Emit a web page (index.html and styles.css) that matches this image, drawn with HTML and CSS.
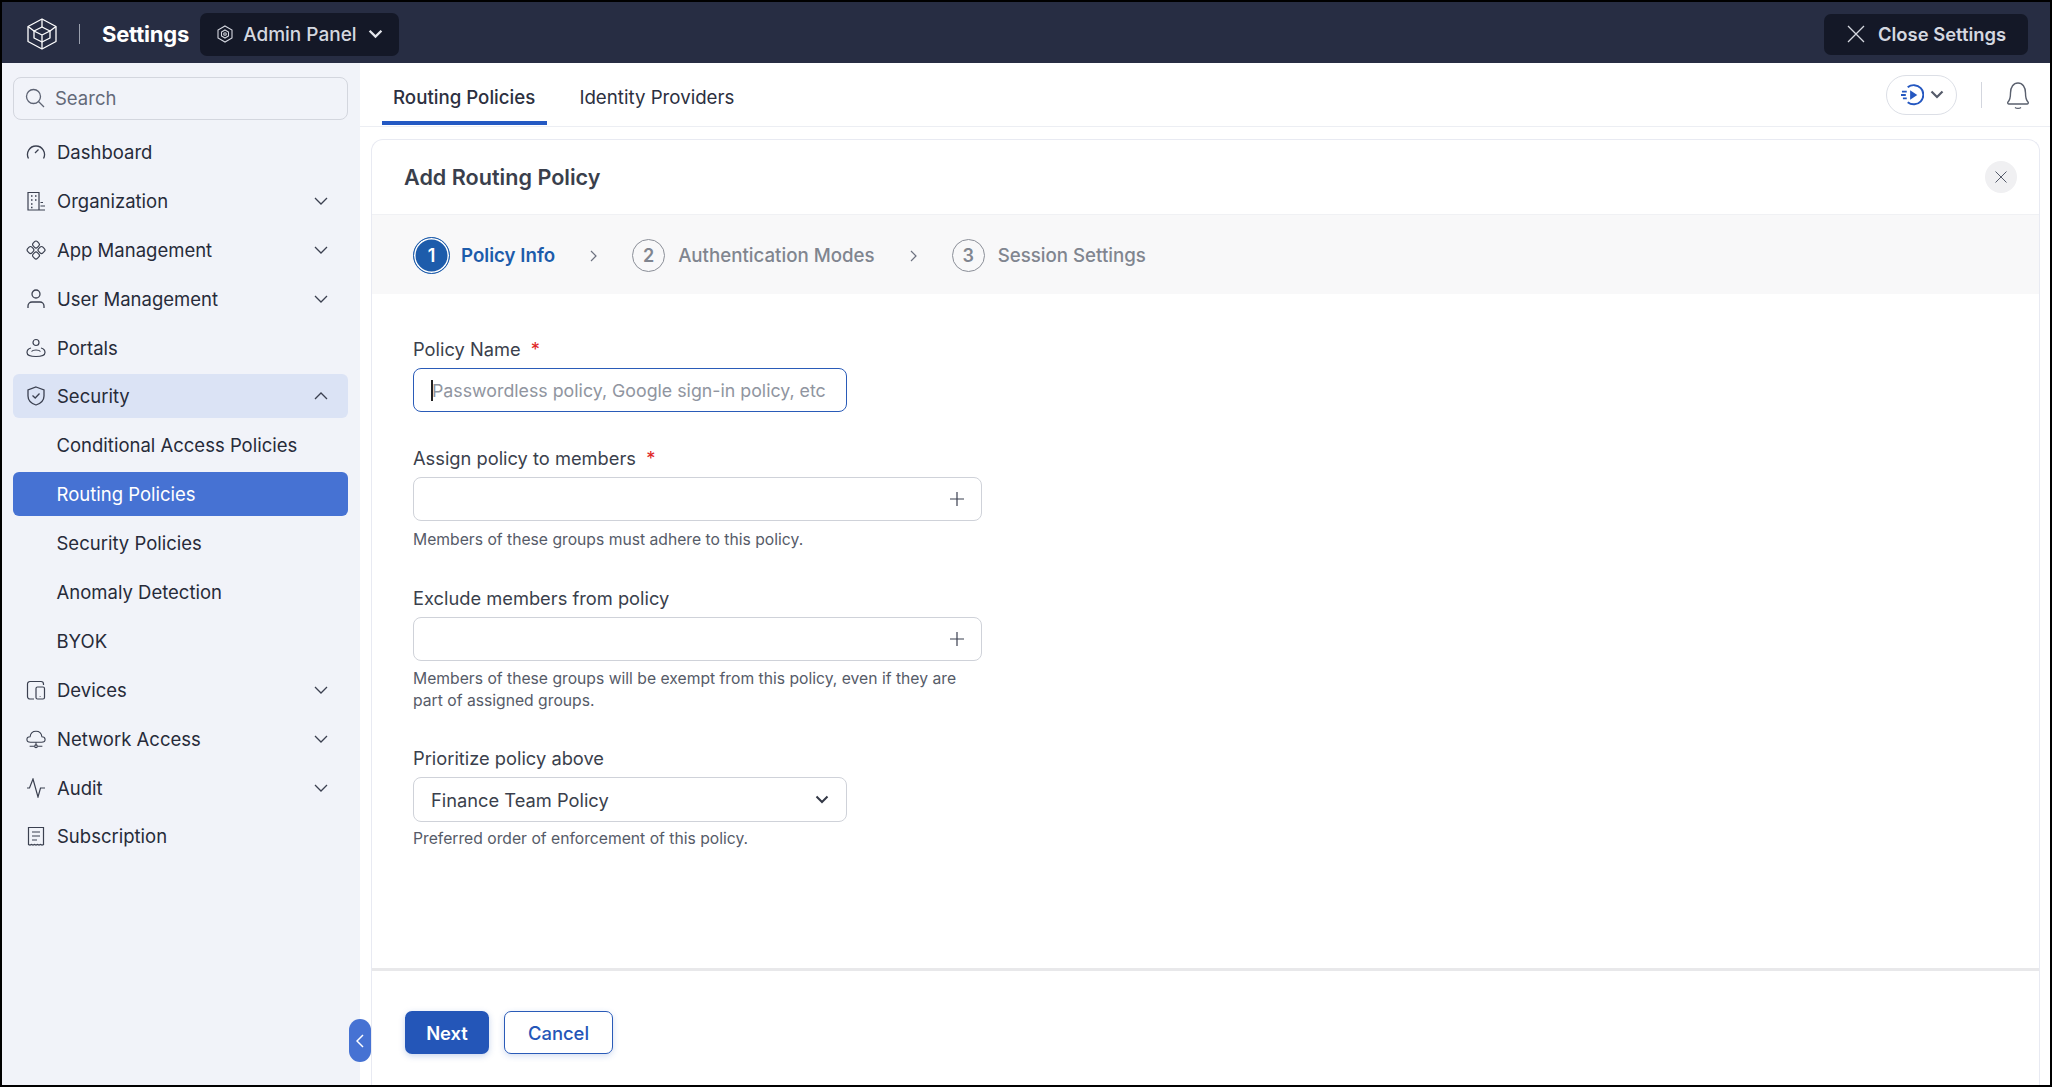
FILE: index.html
```html
<!DOCTYPE html>
<html lang="en">
<head>
    <meta charset="UTF-8">
    <title>Add Routing Policy</title>
    <link rel="stylesheet" href="styles.css">
</head>
<body>
    <header class="topbar">
        <svg class="logo" viewBox="0 0 32 34" fill="none" stroke="#fff" stroke-width="1.3" stroke-linejoin="round"><path d="M16 2 30 9.5V24.5L16 32 2 24.5V9.5Z"/><path d="M16 10 24 14V21L16 25 8 21V14Z"/><path d="M8 14 16 18 24 14M16 18V32M16 2V10M2 9.5 8 14M30 9.5 24 14"/></svg>
        <span class="topbar-sep"></span>
        <span class="topbar-title">Settings</span>
        <div class="panel-switch">
            <svg class="panel-icon" viewBox="0 0 16 18" fill="none" stroke="#d5d8e0" stroke-width="1.1"><path d="M8 1 15 5V13L8 17 1 13V5Z"/><path d="M8 5 11.5 7V11L8 13 4.5 11V7Z"/><circle cx="8" cy="9" r="1.3"/></svg>
            <span>Admin Panel</span>
            <svg class="panel-caret" viewBox="0 0 14 9" fill="none" stroke="#e4e6ec" stroke-width="2.2"><path d="M1.5 1.5 7 7 12.5 1.5"/></svg>
        </div>
        <div class="close-settings">
            <svg class="close-icon" viewBox="0 0 18 18" fill="none" stroke="#d5d8e0" stroke-width="1.3"><path d="M1 1 17 17M17 1 1 17"/></svg>
            <span>Close Settings</span>
        </div>
    </header>

    <div class="layout">
        <aside class="sidebar">
            <div class="search">
                <svg class="icon" viewBox="0 0 20 20" fill="none" stroke="#5d6373" stroke-width="1.3"><circle cx="8.5" cy="8.5" r="7"/><path d="M13.5 13.5 19 19"/></svg>
                <span>Search</span>
            </div>
            <ul class="menu">
                <li class="menu-item">
                    <svg class="icon" viewBox="0 0 20 20" fill="none" stroke="#3b4050" stroke-width="1.3"><path d="M2.5 16.5A8.5 8.5 0 1 1 17.5 16.5"/><path d="M9 11 12.5 7.5"/></svg>
                    <span>Dashboard</span>
                </li>
                <li class="menu-item">
                    <svg class="icon" viewBox="0 0 20 20" fill="none" stroke="#3b4050" stroke-width="1.2"><path d="M2 19V1.5H13V19H2ZM13 19H19M14.5 15H19M14.5 11.5H17"/><path d="M5 5H6.5M9 5H10.5M5 9H6.5M9 9H10.5M5 13H6.5M5 16.5H6.5" stroke-width="1.5"/></svg>
                    <span>Organization</span>
                    <svg class="caret" viewBox="0 0 14 8" fill="none" stroke="#3b4050" stroke-width="1.3"><path d="M1 1 7 7 13 1"/></svg>
                </li>
                <li class="menu-item">
                    <svg class="icon" viewBox="0 0 20 20" fill="none" stroke="#3b4050" stroke-width="1.2"><rect x="7" y="1.5" width="6" height="6" rx="2" transform="rotate(45 10 4.5)"/><rect x="7" y="12.5" width="6" height="6" rx="2" transform="rotate(45 10 15.5)"/><rect x="1.5" y="7" width="6" height="6" rx="2" transform="rotate(45 4.5 10)"/><rect x="12.5" y="7" width="6" height="6" rx="2" transform="rotate(45 15.5 10)"/></svg>
                    <span>App Management</span>
                    <svg class="caret" viewBox="0 0 14 8" fill="none" stroke="#3b4050" stroke-width="1.3"><path d="M1 1 7 7 13 1"/></svg>
                </li>
                <li class="menu-item">
                    <svg class="icon" viewBox="0 0 20 20" fill="none" stroke="#3b4050" stroke-width="1.3"><circle cx="10" cy="5" r="4"/><path d="M2 19V17A4 4 0 0 1 6 13H14A4 4 0 0 1 18 17V19"/></svg>
                    <span>User Management</span>
                    <svg class="caret" viewBox="0 0 14 8" fill="none" stroke="#3b4050" stroke-width="1.3"><path d="M1 1 7 7 13 1"/></svg>
                </li>
                <li class="menu-item">
                    <svg class="icon" viewBox="0 0 20 20" fill="none" stroke="#3b4050" stroke-width="1.2"><circle cx="10" cy="4.5" r="3"/><path d="M5 10C3 10.5 1 12 1 14.5 1 17 5 18.5 10 18.5S19 17 19 14.5C19 12 17 10.5 15 10"/><path d="M5.5 13.5C7 11.5 13 11.5 14.5 13.5"/></svg>
                    <span>Portals</span>
                </li>
                <li class="menu-item menu-open">
                    <svg class="icon" viewBox="0 0 20 20" fill="none" stroke="#3b4050" stroke-width="1.3"><path d="M10 1 18 4V10C18 14.5 14.5 17.5 10 19 5.5 17.5 2 14.5 2 10V4Z"/><path d="M6.5 9.5 9.2 12 13.5 7.5"/></svg>
                    <span>Security</span>
                    <svg class="caret" viewBox="0 0 14 8" fill="none" stroke="#3b4050" stroke-width="1.3"><path d="M1 7 7 1 13 7"/></svg>
                </li>
                <li class="menu-item menu-sub">Conditional Access Policies</li>
                <li class="menu-item menu-sub menu-active">Routing Policies</li>
                <li class="menu-item menu-sub">Security Policies</li>
                <li class="menu-item menu-sub">Anomaly Detection</li>
                <li class="menu-item menu-sub">BYOK</li>
                <li class="menu-item">
                    <svg class="icon" viewBox="0 0 20 20" fill="none" stroke="#3b4050" stroke-width="1.2"><path d="M8 19H4A2.5 2.5 0 0 1 1.5 16.5V4A2.5 2.5 0 0 1 4 1.5H15A2.5 2.5 0 0 1 17.5 4V5"/><rect x="10" y="7" width="8.5" height="12" rx="1.5"/><path d="M14.2 16V16.5" stroke-width="1.5"/></svg>
                    <span>Devices</span>
                    <svg class="caret" viewBox="0 0 14 8" fill="none" stroke="#3b4050" stroke-width="1.3"><path d="M1 1 7 7 13 1"/></svg>
                </li>
                <li class="menu-item">
                    <svg class="icon" viewBox="0 0 22 20" fill="none" stroke="#3b4050" stroke-width="1.2"><path d="M5 13.5H17C19.5 13.5 21 12 21 10.5 21 8.5 19.5 7.5 17.5 7.5 17 4 14.5 1.5 11 1.5 7.5 1.5 5 4 4.5 7.5 2.5 7.5 1 8.5 1 10.5 1 12 2.5 13.5 5 13.5Z"/><path d="M11 13.5V17M4 18H9M13 18H18"/><circle cx="11" cy="18" r="1.5"/></svg>
                    <span>Network Access</span>
                    <svg class="caret" viewBox="0 0 14 8" fill="none" stroke="#3b4050" stroke-width="1.3"><path d="M1 1 7 7 13 1"/></svg>
                </li>
                <li class="menu-item">
                    <svg class="icon" viewBox="0 0 20 20" fill="none" stroke="#3b4050" stroke-width="1.2"><path d="M1 10H3.5L7 1 12 19 14.5 10H19"/></svg>
                    <span>Audit</span>
                    <svg class="caret" viewBox="0 0 14 8" fill="none" stroke="#3b4050" stroke-width="1.3"><path d="M1 1 7 7 13 1"/></svg>
                </li>
                <li class="menu-item">
                    <svg class="icon" viewBox="0 0 20 20" fill="none" stroke="#3b4050" stroke-width="1.2"><path d="M2.5 1.5H17.5V18.5L16 19 14.5 18.5 13 19 11.5 18.5 10 19 8.5 18.5 7 19 5.5 18.5 4 19 2.5 18.5Z"/><path d="M6 6H14M6 10H14M6 14H11"/></svg>
                    <span>Subscription</span>
                </li>
            </ul>
            <div class="collapse-tab">
                <svg viewBox="0 0 8 14" fill="none" stroke="#fff" stroke-width="1.5"><path d="M7 1 1 7 7 13"/></svg>
            </div>
        </aside>

        <main class="content">
            <div class="tabbar">
                <div class="tab tab-active">Routing Policies</div>
                <div class="tab">Identity Providers</div>
                <div class="tabbar-right">
                    <div class="help-pill">
                        <svg class="help-icon" viewBox="0 0 24 24" fill="none" stroke="#2457c0" stroke-width="2"><path d="M7 4.5A10 10 0 1 1 7 20"/><path d="M1 9H6M0 12.5H5M2 16H6"/><path d="M9.5 7.5 17 12.5 9.5 17.5Z" fill="#2457c0" stroke="none"/></svg>
                        <svg class="help-caret" viewBox="0 0 14 9" fill="none" stroke="#555b6a" stroke-width="2.2"><path d="M1.5 1.5 7 7 12.5 1.5"/></svg>
                    </div>
                    <span class="tabbar-sep"></span>
                    <svg class="bell" viewBox="0 0 24 28" fill="none" stroke="#5a606e" stroke-width="1.4"><path d="M2 21C4 19 4.5 17 4.5 12 4.5 6 7.5 2 12 2S19.5 6 19.5 12C19.5 17 20 19 22 21 22.8 22 22 23 21 23H3C2 23 1.2 22 2 21Z"/><path d="M9 26.5C10.5 27.5 13.5 27.5 15 26.5"/></svg>
                </div>
            </div>

            <section class="card">
                <div class="card-head">
                    <h2>Add Routing Policy</h2>
                    <div class="card-close">
                        <svg viewBox="0 0 12 12" fill="none" stroke="#555b6a" stroke-width="1"><path d="M.5.5 11.5 11.5M11.5.5.5 11.5"/></svg>
                    </div>
                </div>

                <div class="steps">
                    <div class="step step-current"><span class="step-num">1</span><span>Policy Info</span></div>
                    <svg class="step-arrow" viewBox="0 0 7 12" fill="none" stroke="#6d7280" stroke-width="1.2"><path d="M1 1 6 6 1 11"/></svg>
                    <div class="step"><span class="step-num">2</span><span>Authentication Modes</span></div>
                    <svg class="step-arrow" viewBox="0 0 7 12" fill="none" stroke="#6d7280" stroke-width="1.2"><path d="M1 1 6 6 1 11"/></svg>
                    <div class="step"><span class="step-num">3</span><span>Session Settings</span></div>
                </div>

                <form class="form">
                    <div class="field field-name">
                        <label>Policy Name <span class="req">*</span></label>
                        <div class="input input-short input-focus"><span class="cursor"></span><span class="placeholder">Passwordless policy, Google sign-in policy, etc</span></div>
                    </div>
                    <div class="field field-assign">
                        <label>Assign policy to members <span class="req">*</span></label>
                        <div class="input input-long">
                            <svg class="plus" viewBox="0 0 14 14" fill="none" stroke="#3b4050" stroke-width="1.2"><path d="M7 0V14M0 7H14"/></svg>
                        </div>
                        <p class="hint">Members of these groups must adhere to this policy.</p>
                    </div>
                    <div class="field field-exclude">
                        <label>Exclude members from policy</label>
                        <div class="input input-long">
                            <svg class="plus" viewBox="0 0 14 14" fill="none" stroke="#3b4050" stroke-width="1.2"><path d="M7 0V14M0 7H14"/></svg>
                        </div>
                        <p class="hint">Members of these groups will be exempt from this policy, even if they are part of assigned groups.</p>
                    </div>
                    <div class="field field-priority">
                        <label>Prioritize policy above</label>
                        <div class="input input-short input-select">
                            <span>Finance Team Policy</span>
                            <svg class="select-caret" viewBox="0 0 14 9" fill="none" stroke="#333846" stroke-width="2"><path d="M1.5 1.5 7 7 12.5 1.5"/></svg>
                        </div>
                        <p class="hint hint-tight">Preferred order of enforcement of this policy.</p>
                    </div>
                </form>

                <div class="card-foot">
                    <button type="button" class="btn btn-primary">Next</button>
                    <button type="button" class="btn btn-outline">Cancel</button>
                </div>
            </section>
        </main>
    </div>
</body>
</html>
```

FILE: styles.css
```css
* {
    box-sizing: border-box;
}
body {
    margin: 0;
    height: 1087px;
    overflow: hidden;
    border: 2px solid #000;
    font-family: Inter, "Liberation Sans", sans-serif;
    color: #2c3040;
    background-color: #fff;
    display: flex;
    flex-direction: column;
}
.topbar {
    height: 61px;
    flex: none;
    background-color: #272d43;
    display: flex;
    align-items: center;
    padding: 3px 22px 0 24px;
    color: #fff;
}
.logo {
    width: 32px;
    height: 34px;
}
.topbar-sep {
    width: 1px;
    height: 20px;
    background-color: #9aa0ae;
    margin-left: 21px;
    margin-right: 22px;
}
.topbar-title {
    font-size: 22px;
    font-weight: 700;
    letter-spacing: -.2px;
}
.panel-switch {
    margin-left: 11px;
    height: 43px;
    width: 199px;
    background-color: #141827;
    border-radius: 7px;
    display: flex;
    align-items: center;
    padding-left: 17px;
    color: #d5d8e0;
    font-size: 19px;
    font-weight: 500;
}
.panel-icon {
    width: 16px;
    height: 18px;
    margin-right: 10px;
}
.panel-caret {
    width: 15px;
    height: 10px;
    margin-left: 11px;
}
.close-settings {
    margin-left: auto;
    height: 41px;
    width: 204px;
    background-color: #141827;
    border-radius: 7px;
    display: flex;
    align-items: center;
    padding-left: 23px;
    color: #d5d8e0;
    font-size: 18.4px;
    font-weight: 600;
}
.close-icon {
    width: 18px;
    height: 18px;
    margin-right: 13px;
}

.layout {
    flex: 1;
    display: flex;
    min-height: 0;
}
.sidebar {
    position: relative;
    width: 358px;
    flex: none;
    background-color: #f1f3f9;
    padding: 14px 11px 0;
}
.search {
    height: 43px;
    width: 335px;
    border: 1px solid #d3d6de;
    border-radius: 8px;
    display: flex;
    align-items: center;
    padding-left: 11px;
    padding-bottom: 2px;
    font-size: 18.5px;
    color: #636978;
}
.search .icon {
    margin-right: 10px;
}
.icon {
    width: 20px;
    height: 20px;
    flex: none;
}
.menu {
    list-style: none;
    margin: 10px 0 0;
    padding: 0;
    width: 335px;
}
.menu-item {
    height: 44px;
    margin-bottom: 4.9px;
    border-radius: 6px;
    display: flex;
    align-items: center;
    padding-left: 14px;
    font-size: 18.5px;
    color: #272b39;
}
.menu-item .icon {
    margin-right: 11px;
    margin-left: -1px;
}
.menu-item .caret {
    width: 14px;
    height: 8px;
    margin-left: auto;
    margin-right: 20px;
}
.menu-open {
    background-color: #dbe3f5;
}
.menu-sub {
    padding-left: 43.5px;
}
.menu-active {
    background-color: #4672d3;
    color: #fff;
}
.collapse-tab {
    position: absolute;
    left: 347px;
    top: 956px;
    width: 22px;
    height: 43px;
    border-radius: 11px;
    background-color: #4672d3;
    display: flex;
    align-items: center;
    justify-content: center;
}
.collapse-tab svg {
    width: 8px;
    height: 14px;
}

.content {
    flex: 1;
    min-width: 0;
    display: flex;
    flex-direction: column;
    padding-left: 11px;
    padding-right: 10px;
}
.tabbar {
    height: 64px;
    flex: none;
    margin-left: -11px;
    margin-right: -10px;
    padding-left: 22px;
    padding-right: 20px;
    border-bottom: 1px solid #eceef3;
    display: flex;
    align-items: stretch;
    font-size: 18.7px;
}
.tab {
    display: flex;
    align-items: center;
    padding: 10px 11px 0;
    margin-right: 21px;
    margin-bottom: 1px;
    color: #2c3040;
    border-bottom: 4px solid transparent;
}
.tab-active {
    font-weight: 500;
    padding-right: 12px;
    border-bottom-color: #2459c3;
}
.tabbar-right {
    margin-left: auto;
    display: flex;
    align-items: center;
}
.help-pill {
    width: 71px;
    height: 40px;
    border: 1px solid #dcdfe6;
    border-radius: 20px;
    display: flex;
    align-items: center;
    padding-left: 14px;
}
.help-icon {
    width: 23px;
    height: 23px;
}
.help-caret {
    width: 14px;
    height: 9px;
    margin-left: 6px;
}
.tabbar-sep {
    width: 1px;
    height: 26px;
    background-color: #d3d6de;
    margin-left: 24px;
    margin-right: 24px;
}
.bell {
    width: 24px;
    height: 28px;
}

.card {
    flex: 1;
    min-height: 0;
    margin-top: 12px;
    border: 1px solid #e8eaf2;
    border-bottom: none;
    border-radius: 12px 12px 0 0;
    display: flex;
    flex-direction: column;
}
.card-head {
    height: 75px;
    flex: none;
    display: flex;
    align-items: center;
    justify-content: space-between;
    padding-left: 32px;
    padding-right: 22px;
    border-bottom: 1px solid #f0f1f4;
}
.card-head h2 {
    margin: 0;
    font-size: 21.6px;
    font-weight: 600;
    color: #3a3f4c;
}
.card-close {
    width: 32px;
    height: 32px;
    border-radius: 50%;
    background-color: #f0f0f2;
    display: flex;
    align-items: center;
    justify-content: center;
}
.card-close svg {
    width: 12px;
    height: 12px;
}
.steps {
    height: 79px;
    flex: none;
    background-color: #f8f8f9;
    display: flex;
    align-items: center;
    padding-left: 41px;
    padding-top: 2px;
    font-size: 18.7px;
    font-weight: 500;
    color: #80858f;
}
.step {
    display: flex;
    align-items: center;
}
.step-num {
    width: 33px;
    height: 33px;
    border: 1.3px solid #8b8f98;
    border-radius: 50%;
    display: flex;
    align-items: center;
    justify-content: center;
    margin-right: 13px;
    font-weight: 600;
    font-size: 18px;
}
.step-current {
    color: #1d5cab;
    font-weight: 600;
}
.step-current .step-num {
    width: 37px;
    height: 37px;
    background-color: #1d5cab;
    color: #fff;
    border: 1px solid #1d5cab;
    box-shadow: inset 0 0 0 1.5px #fff;
    margin-right: 11px;
}
.step-arrow {
    width: 7px;
    height: 12px;
    margin-left: 35px;
    margin-right: 35px;
}

.form {
    flex: 1;
    min-height: 0;
    padding-left: 41px;
    font-size: 18.3px;
    color: #3a3f4c;
}
.field label {
    display: block;
    line-height: 22px;
}
.field-name {
    padding-top: 44px;
}
.field-assign {
    padding-top: 35px;
}
.field-exclude {
    padding-top: 36px;
}
.field-priority {
    padding-top: 35px;
}
.req {
    color: #e02828;
    margin-left: 5px;
}
.input {
    margin-top: 8px;
    height: 44px;
    border: 1px solid #cfd2d9;
    border-radius: 8px;
    display: flex;
    align-items: center;
    padding-left: 17px;
    padding-right: 17px;
    background-color: #fff;
    color: #3a3f4c;
}
.input-short {
    width: 434px;
}
.input-long {
    width: 569px;
}
.input-focus {
    border: 1.5px solid #2a5bb8;
}
.cursor {
    width: 2px;
    height: 21px;
    background-color: #222;
    flex: none;
}
.placeholder {
    color: #9095a0;
    font-size: 17.8px;
    white-space: nowrap;
    margin-left: -1px;
}
.plus {
    width: 14px;
    height: 14px;
    margin-left: auto;
}
.input-select {
    height: 45px;
}
.select-caret {
    width: 14px;
    height: 9px;
    margin-left: auto;
}
.hint {
    margin: 7.5px 0 0;
    width: 569px;
    font-size: 15.7px;
    line-height: 22px;
    color: #565b68;
}
.hint-tight {
    margin-top: 6px;
}
.card-foot {
    height: 117px;
    flex: none;
    border-top: 3px solid #e8e8ea;
    padding-left: 33px;
    padding-top: 40px;
    display: flex;
    align-items: flex-start;
    gap: 15px;
}
.btn {
    height: 43px;
    border-radius: 7px;
    font-family: inherit;
    font-size: 18.4px;
    font-weight: 600;
}
.btn-primary {
    width: 84px;
    color: #fff;
    border: none;
    background-color: #2456b8;
    box-shadow: 0 2px 6px rgba(36, 86, 184, .25);
}
.btn-outline {
    width: 109px;
    color: #2456b8;
    background-color: #fff;
    border: 1.5px solid #2a5bb8;
    font-weight: 500;
    box-shadow: 0 2px 6px rgba(36, 86, 184, .2);
}
```
